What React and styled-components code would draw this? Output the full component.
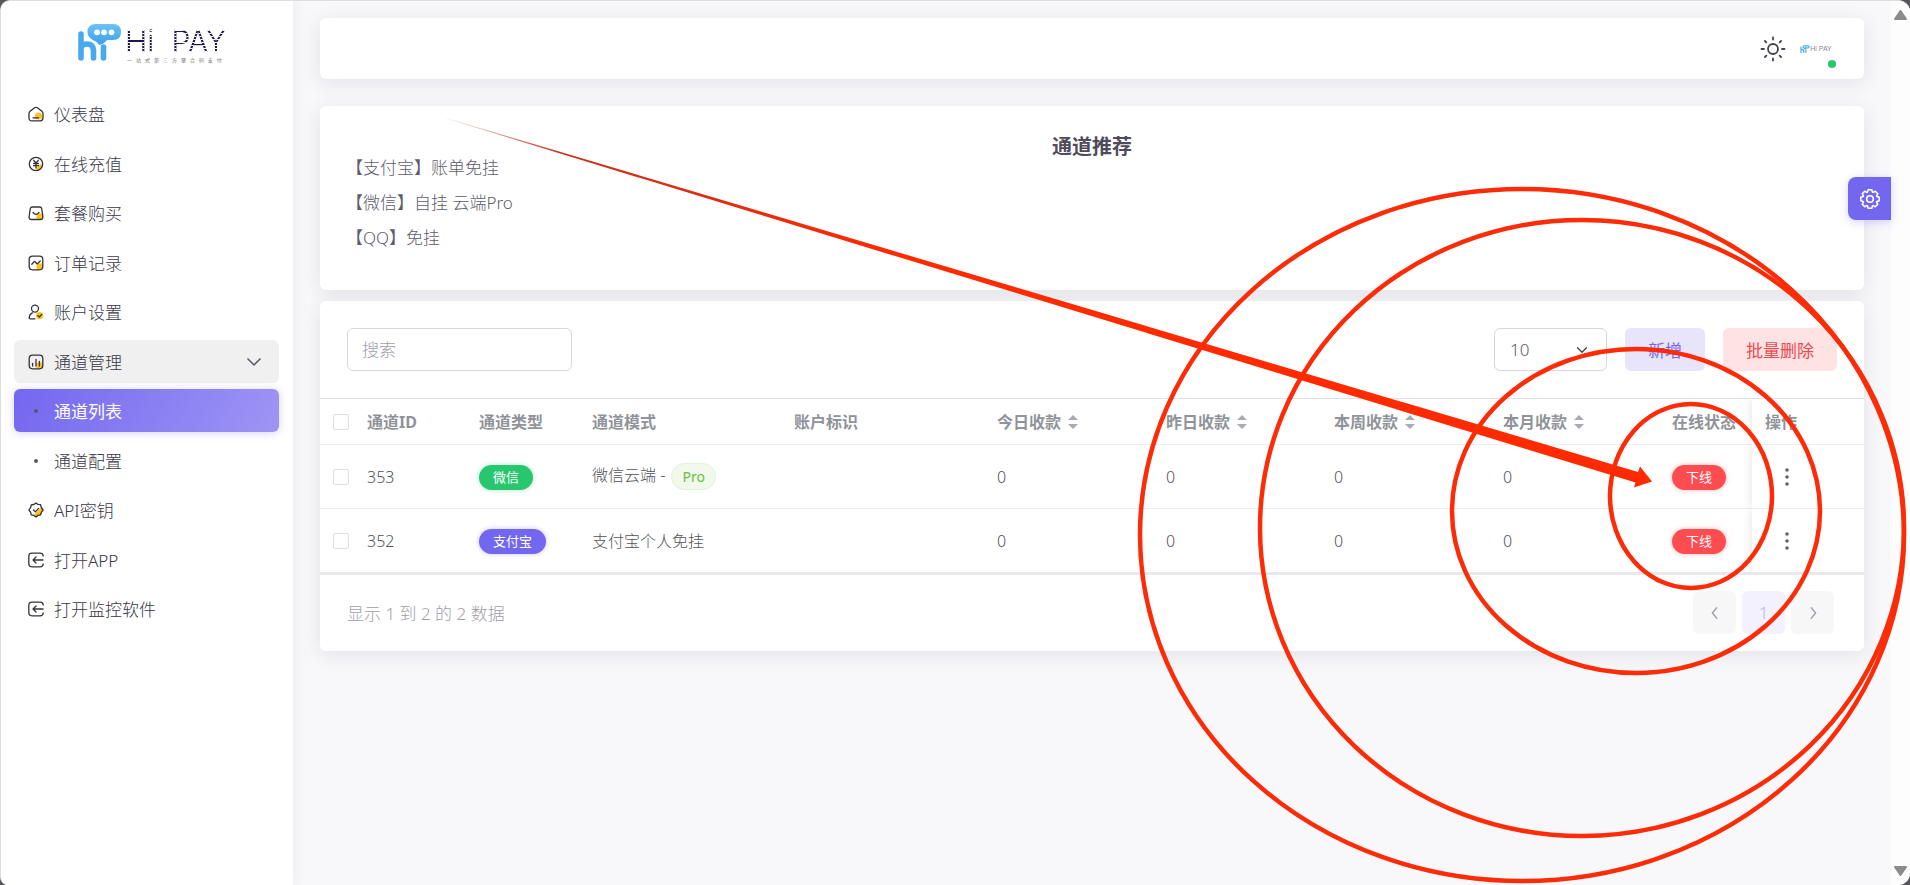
import React, { useState } from "react";
import styled, { createGlobalStyle, css } from "styled-components";

const navItems = [
    { label: '仪表盘', icon: 'home' },
    { label: '在线充值', icon: 'coin' },
    { label: '套餐购买', icon: 'bag' },
    { label: '订单记录', icon: 'order' },
    { label: '账户设置', icon: 'user' },
    {
        label: '通道管理',
        icon: 'chart',
        open: true,
        children: [{ label: '通道列表', active: true }, { label: '通道配置' }],
    },
    { label: 'API密钥', icon: 'badge' },
    { label: '打开APP', icon: 'exit' },
    { label: '打开监控软件', icon: 'exit' },
];

const notices = ['【支付宝】账单免挂', '【微信】自挂 云端Pro', '【QQ】免挂'];

const columns = [
    { label: '通道ID', width: 112 },
    { label: '通道类型', width: 113 },
    { label: '通道模式', width: 202 },
    { label: '账户标识', width: 203 },
    { label: '今日收款', width: 169, sortable: true },
    { label: '昨日收款', width: 168, sortable: true },
    { label: '本周收款', width: 169, sortable: true },
    { label: '本月收款', width: 169, sortable: true },
    { label: '在线状态', width: 93 },
];

const channels = [
    { id: 353, type: '微信', tone: 'green', mode: '微信云端 - ', tag: 'Pro', totals: [0, 0, 0, 0], status: '下线' },
    { id: 352, type: '支付宝', tone: 'purple', mode: '支付宝个人免挂', totals: [0, 0, 0, 0], status: '下线' },
];

const tones = {
    green: '#28c76f',
    purple: '#7367f0',
    red: '#ff4c51',
};

const subtitle = '一站式第三方聚合码支付';

const iconShapes = {
    home: (
        <>
            <circle cx="10.5" cy="10" r="3.6" fill="#fcc419" stroke="none" />
            <path d="M1.8 5.6 6.600 1.800Q8 .8 9.400 1.800l4.800 3.800q.8.8.8 2v4.400q0 2.800-2.800 2.800H3.800Q1 14.800 1 12V7.600q0-1.200.8-2z" />
            <path d="M5 11.800h5.500" />
        </>
    ),
    coin: (
        <>
            <path d="M14.500 8A7 7 0 0 1 8 14.800q0-2.800 2-4.800t4.500-2z" fill="#fcc419" stroke="none" />
            <circle cx="8" cy="8" r="6.700" />
            <path d="M5.700 4.300 8 7l2.300-2.700M8 7v5M5.600 7.500h4.800M5.600 9.700h4.800" />
        </>
    ),
    bag: (
        <>
            <path d="M8.500 14.500V10q0-1.500 1.500-1.500h5v4q0 2-2 2z" fill="#fcc419" stroke="none" />
            <path d="M4.300 2h7.400q1.700 0 2 1.700l1.200 7.800q.3 3-2.500 3H3.600q-2.800 0-2.500-3l1.200-7.800Q2.600 2 4.300 2z" />
            <path d="M5 7.500q3 3.800 6 0" />
        </>
    ),
    order: (
        <>
            <path d="M8.500 14.800V10q0-1.500 1.500-1.500h4.800V12q0 2.800-2.800 2.800z" fill="#fcc419" stroke="none" />
            <rect x="1.200" y="1.200" width="13.600" height="13.600" rx="3.200" />
            <path d="M3.800 9.300 6 6.800q.5-.5 1 0l1.700 1.700q.5.500 1 0L12.200 6" />
        </>
    ),
    user: (
        <>
            <circle cx="11.700" cy="11.700" r="3.600" fill="#fcc419" stroke="none" />
            <circle cx="7" cy="4.600" r="3.500" />
            <path d="M4.300 8.800Q1.200 10.300 1.200 14q0 .8.800.8h5" />
            <path d="m9.800 11.600 1.400 1.400 2.600-2.600" />
        </>
    ),
    chart: (
        <>
            <path d="M8.500 14.800V10q0-1.500 1.500-1.500h4.800V12q0 2.800-2.800 2.800z" fill="#fcc419" stroke="none" />
            <rect x="1.200" y="1.200" width="13.600" height="13.600" rx="3.200" />
            <path d="M4.600 9.500V12M8 5.500V12M11.400 7.500V12" />
        </>
    ),
    badge: (
        <>
            <path d="m14 4.500-9 9 3 1.500 2.500-1 2.800-1.200.5-2.600L15.200 8z" fill="#fcc419" stroke="none" />
            <path d="M8 .9 10 2.400l2.600.200.500 2.600L15.100 8l-1.800 2.300-.700 2.500-2.600.500L8 15.100l-2.300-1.700-2.500-.500-.500-2.600L.9 8l1.800-2.600.500-2.600 2.700-.300z" />
            <path d="m5.500 8 1.800 1.900 3.300-3.500" />
        </>
    ),
    exit: (
        <>
            <path d="M15.200 4Q15 1.200 12 1.200H4Q.8 1.200.8 4.400v7.200q0 3.200 3.200 3.200h8q3 0 3.200-2.800" />
            <path d="M15 8H5M8 5 5 8l3 3" />
        </>
    ),
};

const NavIcon = ({ name }) => (
    <svg width="16" height="16" viewBox="0 0 16 16" fill="none" stroke="#35323d" strokeWidth="1.3" strokeLinecap="round" strokeLinejoin="round" aria-hidden="true">
        {iconShapes[name]}
    </svg>
);

const Chevron = ({ size = 14, direction = 'down', color = '#625f6e' }) => {
    const paths = {
        down: 'M2 5l6 6 6-6',
        left: 'M10 2L5 8l5 6',
        right: 'M6 2l5 6-5 6',
    };
    return (
        <svg width={size} height={size} viewBox="0 0 16 16" fill="none" stroke={color} strokeWidth="1.7" strokeLinecap="round" strokeLinejoin="round" aria-hidden="true">
            <path d={paths[direction]} />
        </svg>
    );
};

const LogoMark = ({ width, height }) => (
    <svg width={width} height={height} viewBox="0 0 43 37" fill="none" aria-hidden="true">
        <defs>
            <linearGradient id="mark" x1="0" y1="0" x2="0" y2="1">
                <stop offset="0" stopColor="#6cc3f3" />
                <stop offset="1" stopColor="#3b9fee" />
            </linearGradient>
        </defs>
        <path
            d="M18 0H35Q43 0 43 8T35 16H29Q26 20 21.500 21Q18 17 14 15.500Q9.500 13 9.500 8Q9.500 0 18 0z"
            fill="url(#mark)"
        />
        <path d="M3 10V34M3 25Q3 20 9 20T15.500 26V34M25.500 23V34" stroke="#48a9ef" strokeWidth="5.600" strokeLinecap="round" />
        <g fill="#fff">
            <circle cx="19" cy="8.300" r="2.900" />
            <circle cx="26" cy="8.300" r="2.900" />
            <circle cx="33.500" cy="8.300" r="2.900" />
        </g>
    </svg>
);

const SunIcon = () => (
    <svg width="26" height="26" viewBox="0 0 26 26" fill="none" stroke="#44414f" strokeWidth="1.800" strokeLinecap="round" aria-hidden="true">
        <circle cx="13" cy="13" r="5" />
        <path d="M13 1.500v2M13 22.500v2M1.500 13h2.500M22 13h2.500M5 5l1.300 1.300M19.700 19.700 21 21M5 21l1.300-1.300M19.700 6.300 21 5" />
    </svg>
);

// eight rounded teeth around a ring
const gearPoints = Array.from({ length: 8 }, (_, i) => (
    [[-20, 7.300], [-11, 9.400], [11, 9.400], [20, 7.300]].map(([offset, radius]) => {
        const angle = ((i * 45 + offset) * Math.PI) / 180;
        return `${(11 + radius * Math.cos(angle)).toFixed(2)},${(11 + radius * Math.sin(angle)).toFixed(2)}`;
    }).join(' ')
)).join(' ');

const GearIcon = () => (
    <svg width="22" height="22" viewBox="0 0 22 22" fill="none" stroke="#fff" strokeWidth="1.600" strokeLinejoin="round" aria-hidden="true">
        <circle cx="11" cy="11" r="3.300" />
        <polygon points={gearPoints} />
    </svg>
);

const SortIcon = () => (
    <svg width="10" height="16" viewBox="0 0 10 16" fill="#a8abb2" aria-hidden="true">
        <path d="M5 1l5 5H0zM5 15l5-5H0z" />
    </svg>
);

const DotsIcon = () => (
    <svg width="4" height="18" viewBox="0 0 4 18" fill="#625f6e" aria-hidden="true">
        <circle cx="2" cy="2" r="1.800" />
        <circle cx="2" cy="9" r="1.800" />
        <circle cx="2" cy="16" r="1.800" />
    </svg>
);

const ScrollArrow = ({ down }) => (
    <svg width="13" height="10" viewBox="0 0 13 10" fill="#8b8b8b" stroke="#8b8b8b" strokeWidth="2" strokeLinejoin="round" aria-hidden="true">
        <path d={down ? 'M1 1h11L6.500 9z' : 'M1 9h11L6.500 1z'} />
    </svg>
);

// red pen marks pointing at the offline channels
const Marks = () => (
    <MarkLayer viewBox="0 0 1910 885" fill="none" stroke="#fb2c07" strokeWidth="4.500" aria-hidden="true">
        <defs>
            <linearGradient id="fade" gradientUnits="userSpaceOnUse" x1="446" y1="118" x2="900" y2="255">
                <stop offset="0" stopColor="#c0392b" stopOpacity="0.100" />
                <stop offset="0.250" stopColor="#c8301c" />
                <stop offset="1" stopColor="#ff2a00" />
            </linearGradient>
        </defs>
        <ellipse cx="1522" cy="535" rx="382" ry="346" />
        <ellipse cx="1582" cy="528" rx="322" ry="308" />
        <ellipse cx="1636" cy="511" rx="184" ry="162" />
        <ellipse cx="1691" cy="496" rx="81" ry="92" />
        <path d="M446 118 1638 472 1640 466.500 1652 481.500 1634 487.500 1635.500 482.500 446 118.600z" fill="url(#fade)" stroke="none" />
    </MarkLayer>
);

const Sidebar = () => (
    <Aside>
        <Brand href="#">
            <LogoMark width="43" height="37" />
            <BrandText>
                <BrandName><span>Hi</span> <span>PAY</span></BrandName>
                <BrandSub>
                    {subtitle.split('').map((char) => <span key={char}>{char}</span>)}
                </BrandSub>
            </BrandText>
        </Brand>
        <nav>
            <NavList>
                {navItems.map((item) => (
                    <NavEntry key={item.label}>
                        <NavLink href="#" $open={item.open}>
                            <NavIcon name={item.icon} />
                            <NavLabel>{item.label}</NavLabel>
                            {item.children && <Chevron size={16} />}
                        </NavLink>
                        {item.children && (
                            <NavList>
                                {item.children.map((child) => (
                                    <NavEntry key={child.label}>
                                        <NavLink href="#" $active={child.active}>
                                            <Bullet />
                                            <NavLabel>{child.label}</NavLabel>
                                        </NavLink>
                                    </NavEntry>
                                ))}
                            </NavList>
                        )}
                    </NavEntry>
                ))}
            </NavList>
        </nav>
    </Aside>
);

const ChannelTable = () => {
    const [selected, setSelected] = useState([]);

    const toggle = (id) => {
        setSelected(selected.includes(id) ? selected.filter((s) => s !== id) : [...selected, id]);
    };

    const toggleAll = () => {
        setSelected(selected.length === channels.length ? [] : channels.map((c) => c.id));
    };

    return (
        <Table>
            <colgroup>
                <Col $width={34} />
                {columns.map((col) => <Col key={col.label} $width={col.width} />)}
                <Col $width={112} />
            </colgroup>
            <thead>
                <tr>
                    <CheckHead>
                        <Checkbox type="checkbox" aria-label="全选" checked={selected.length === channels.length} onChange={toggleAll} />
                    </CheckHead>
                    {columns.map((col) => (
                        <Th key={col.label}>
                            {col.sortable ? <SortButton type="button">{col.label}<SortIcon /></SortButton> : col.label}
                        </Th>
                    ))}
                    <StickyTh>操作</StickyTh>
                </tr>
            </thead>
            <tbody>
                {channels.map((row) => (
                    <Row key={row.id}>
                        <CheckCell>
                            <Checkbox type="checkbox" aria-label={`选择 ${row.id}`} checked={selected.includes(row.id)} onChange={() => toggle(row.id)} />
                        </CheckCell>
                        <Td>{row.id}</Td>
                        <Td><Pill $tone={row.tone}>{row.type}</Pill></Td>
                        <Td>{row.mode}{row.tag && <Tag>{row.tag}</Tag>}</Td>
                        <Td />
                        {row.totals.map((total, i) => <Td key={i}>{total}</Td>)}
                        <Td><Pill $tone="red">{row.status}</Pill></Td>
                        <StickyTd>
                            <MoreButton type="button" aria-label="更多"><DotsIcon /></MoreButton>
                        </StickyTd>
                    </Row>
                ))}
            </tbody>
        </Table>
    );
};

const App = () => {
    const [search, setSearch] = useState('');
    const [pageSize, setPageSize] = useState('10');

    return (
        <>
            <GlobalStyle />
            <Frame>
                <Sidebar />
                <Main>
                    <TopBar>
                        <IconButton type="button" aria-label="切换主题"><SunIcon /></IconButton>
                        <Avatar type="button" aria-label="账户">
                            <LogoMark width="10" height="8" />
                            <AvatarName>Hi PAY</AvatarName>
                            <OnlineDot />
                        </Avatar>
                    </TopBar>
                    <NoticeCard>
                        <NoticeTitle>通道推荐</NoticeTitle>
                        {notices.map((notice) => <Notice key={notice}>{notice}</Notice>)}
                    </NoticeCard>
                    <Card>
                        <Toolbar>
                            <SearchInput
                                type="text"
                                placeholder="搜索"
                                aria-label="搜索"
                                value={search}
                                onChange={(ev) => setSearch(ev.target.value)}
                            />
                            <Actions>
                                <SelectWrap>
                                    <Select aria-label="每页数量" value={pageSize} onChange={(ev) => setPageSize(ev.target.value)}>
                                        <option>10</option>
                                        <option>25</option>
                                        <option>50</option>
                                    </Select>
                                    <SelectArrow><Chevron size={12} color="#44414f" /></SelectArrow>
                                </SelectWrap>
                                <FlatButton type="button" $color="#7367f0" $bg="#e8e5fb">新增</FlatButton>
                                <FlatButton type="button" $color="#ea4b50" $bg="#ffe2e3">批量删除</FlatButton>
                            </Actions>
                        </Toolbar>
                        <TableWrap><ChannelTable /></TableWrap>
                        <Footer>
                            <Summary>显示 1 到 2 的 2 数据</Summary>
                            <Pager>
                                <PageButton type="button" aria-label="上一页"><Chevron direction="left" color="#a5a3ae" /></PageButton>
                                <PageButton type="button" $current>1</PageButton>
                                <PageButton type="button" aria-label="下一页"><Chevron direction="right" color="#a5a3ae" /></PageButton>
                            </Pager>
                        </Footer>
                    </Card>
                </Main>
                <ScrollRail>
                    <ScrollArrow />
                    <ScrollArrow down />
                </ScrollRail>
                <SettingsButton type="button" aria-label="设置"><GearIcon /></SettingsButton>
                <Marks />
            </Frame>
        </>
    );
};

const GlobalStyle = createGlobalStyle`
    * {
        box-sizing: border-box;
    }
    body {
        margin: 0;
        background: #55555a;
        font-family: "Noto Sans", "Noto Sans CJK SC", sans-serif;
        font-size: 17px;
        font-weight: 300;
        color: #5f5c6c;
    }
    button, input, select {
        font: inherit;
        color: inherit;
    }
    button {
        border: none;
        padding: 0;
        background: none;
        cursor: pointer;
    }
    svg {
        display: block;
        flex-shrink: 0;
    }
`

const Frame = styled.div`
    position: relative;
    display: flex;
    min-height: 100vh;
    border-top: 1px solid #dedee2;
    border-left: 1px solid #dedee2;
    border-radius: 10px 12px 12px 8px;
    background: #f8f8fb;
    overflow: hidden;
`
const Aside = styled.aside`
    width: 292px;
    flex-shrink: 0;
    padding: 0 14px 0 13px;
    background: #fff;
    box-shadow: 0 0 15px rgba(34, 41, 47, 0.08);
`
const Brand = styled.a`
    display: flex;
    height: 91px;
    padding: 23px 0 0 64px;
    gap: 4px;
    text-decoration: none;
`
const BrandText = styled.div`
    width: 101px;
`
/* dotted lettering: the dot grid shows only through the glyphs */
const BrandName = styled.div`
    display: flex;
    justify-content: space-between;
    font-family: Inter, "Liberation Sans", sans-serif;
    font-size: 30px;
    font-weight: 300;
    line-height: 34px;
    height: 33px;
    white-space: nowrap;
    color: transparent;
    background:
        repeating-linear-gradient(0deg, transparent 0 2px, #fff 2px 3px),
        #1f164c;
    -webkit-background-clip: text;
    background-clip: text;
`
const BrandSub = styled.div`
    display: flex;
    justify-content: space-between;
    padding: 0 4px 0 2px;
    font-size: 5px;
    font-weight: 400;
    line-height: 7px;
    color: #777;
`
const NavList = styled.ul`
    margin: 0;
    padding: 0;
    list-style: none;
`
const NavEntry = styled.li`
    margin-top: 6px;

    &:nth-child(even) {
        margin-top: 7px;
    }
    nav > ul > &:first-child {
        margin-top: 0;
    }
`
const NavLink = styled.a`
    display: flex;
    align-items: center;
    gap: 10px;
    height: 43px;
    padding: 0 17px 0 14px;
    border-radius: 6px;
    color: #3b3848;
    text-decoration: none;

    ${({ $open }) => $open && css`
        background: #f0f0f0;
    `}
    ${({ $active }) => $active && css`
        font-weight: 400;
        color: #fff;
        background: linear-gradient(118deg, #7367f0, #9e95f5);
        box-shadow: 0 1px 8px rgba(115, 103, 240, 0.3);
    `}
`
const NavLabel = styled.span`
    flex: 1;
`
const Bullet = styled.span`
    width: 4px;
    height: 4px;
    margin: 0 6px;
    border-radius: 50%;
    background: #5c5870;
`
const Main = styled.main`
    flex: 1;
    min-width: 0;
    padding: 17px 27px;
`
const Card = styled.section`
    border-radius: 6px;
    background: #fff;
    box-shadow: 0 4px 20px rgba(34, 41, 47, 0.1);
`
const TopBar = styled.header`
    display: flex;
    align-items: center;
    justify-content: flex-end;
    gap: 10px;
    height: 61px;
    margin-bottom: 27px;
    padding-right: 28px;
    border-radius: 6px;
    background: #fff;
    box-shadow: 0 4px 20px rgba(34, 41, 47, 0.1);
`
const IconButton = styled.button`
    display: flex;
`
const Avatar = styled.button`
    position: relative;
    display: flex;
    align-items: center;
    justify-content: center;
    width: 40px;
    height: 40px;
    border-radius: 50%;
`
const AvatarName = styled.span`
    font-family: "Liberation Sans", sans-serif;
    font-size: 7px;
    line-height: 8px;
    white-space: nowrap;
    color: #8a8794;
`
const OnlineDot = styled.span`
    position: absolute;
    right: 0;
    bottom: 1px;
    width: 8px;
    height: 8px;
    border-radius: 50%;
    background: #28c76f;
`
const NoticeCard = styled(Card)`
    display: flex;
    flex-direction: column;
    gap: 11px;
    margin-bottom: 11px;
    padding: 31px 26px 40px;
`
const NoticeTitle = styled.h4`
    margin: 0 0 -12px;
    font-size: 20px;
    line-height: 20px;
    font-weight: 700;
    text-align: center;
    color: #4f4b5c;
`
const Notice = styled.p`
    margin: 0;
    line-height: 24px;
`
const Toolbar = styled.div`
    display: flex;
    justify-content: space-between;
    padding: 27px;
`
const Actions = styled.div`
    display: flex;
    gap: 18px;
`
const controlBox = css`
    height: 43px;
    border: 1px solid #d8d6de;
    border-radius: 6px;
    background: #fff;
    outline: none;
`
const SearchInput = styled.input`
    ${controlBox}
    width: 225px;
    padding: 0 14px;

    &::placeholder {
        color: #a0a0aa;
    }
`
const SelectWrap = styled.div`
    position: relative;
`
const Select = styled.select`
    ${controlBox}
    width: 113px;
    padding: 0 15px;
    appearance: none;
`
const SelectArrow = styled.span`
    position: absolute;
    top: 16px;
    right: 19px;
    pointer-events: none;
`
const FlatButton = styled.button`
    height: 43px;
    padding: 0 23px;
    border-radius: 6px;
    font-weight: 400;
    color: ${({ $color }) => $color};
    background: ${({ $bg }) => $bg};
`
const TableWrap = styled.div`
    overflow: hidden;
    border-top: 1px solid #e2e2e6;
    border-bottom: 3px solid #e8e8ee;
`
const Table = styled.table`
    width: 100%;
    table-layout: fixed;
    border-collapse: separate;
    border-spacing: 0;
    font-size: 16px;
    line-height: 24px;
    color: #525458;
`
const Col = styled.col`
    width: ${({ $width }) => $width}px;
`
const Th = styled.th`
    height: 46px;
    padding: 0 0 0 13px;
    border-bottom: 1px solid #ebeef5;
    font-weight: 700;
    text-align: left;
    white-space: nowrap;
    color: #909399;
`
const CheckHead = styled(Th)`
    line-height: 0;
`
const Row = styled.tr`
    height: 64px;

    &:last-child {
        height: 63px;
    }
    &:last-child > td {
        border-bottom: none;
    }
`
const Td = styled.td`
    padding: 0 0 0 13px;
    border-bottom: 1px solid #ebeef5;
    white-space: nowrap;
`
const CheckCell = styled(Td)`
    line-height: 0;
`
const stickyEdge = css`
    box-shadow: 0 0 10px rgba(0, 0, 0, 0.12);
    clip-path: inset(0 0 0 -12px);
    background: #fff;
`
const StickyTh = styled(Th)`
    ${stickyEdge}
`
const StickyTd = styled(Td)`
    ${stickyEdge}
`
const Checkbox = styled.input`
    width: 16px;
    height: 16px;
    margin: 0;
    border: 1px solid #dcdfe6;
    border-radius: 2px;
    background: #fff;
    appearance: none;

    &:checked {
        border-color: #7367f0;
        background: #7367f0;
    }
`
const SortButton = styled.button`
    display: flex;
    align-items: center;
    gap: 7px;
`
const Pill = styled.span`
    display: inline-block;
    height: 25px;
    margin-top: 2px;
    padding: 0 14px;
    border-radius: 13px;
    font-size: 13px;
    font-weight: 400;
    line-height: 25px;
    vertical-align: middle;
    color: #fff;
    background: ${({ $tone }) => tones[$tone]};
    box-shadow: 0 0 5px ${({ $tone }) => tones[$tone]}66;
`
const Tag = styled.span`
    display: inline-block;
    height: 27px;
    margin-left: 2px;
    padding: 0 10px;
    border: 1px solid #e1f3d8;
    border-radius: 14px;
    font-size: 14px;
    font-weight: 400;
    line-height: 25px;
    vertical-align: middle;
    color: #67c23a;
    background: #f0f9eb;
`
const MoreButton = styled.button`
    display: flex;
    align-items: center;
    justify-content: center;
    width: 43px;
    height: 43px;
`
const Footer = styled.footer`
    display: flex;
    align-items: center;
    justify-content: space-between;
    padding: 16px 30px 17px 27px;
`
const Summary = styled.p`
    margin: 0;
    color: #9f9ea9;
`
const Pager = styled.div`
    display: flex;
    gap: 6px;
`
const PageButton = styled.button`
    display: flex;
    align-items: center;
    justify-content: center;
    width: 43px;
    height: 43px;
    border-radius: 6px;
    color: ${({ $current }) => $current ? '#b9b3f7' : '#a5a3ae'};
    background: ${({ $current }) => $current ? '#f3f1fe' : '#f7f7f8'};
`
const ScrollRail = styled.div`
    display: flex;
    flex-direction: column;
    align-items: center;
    justify-content: space-between;
    width: 19px;
    flex-shrink: 0;
    padding: 9px 0;
    background: #fdfdfd;
`
const SettingsButton = styled.button`
    position: absolute;
    top: 176px;
    right: 19px;
    display: flex;
    align-items: center;
    justify-content: center;
    width: 43px;
    height: 43px;
    border-radius: 8px 0 0 8px;
    background: #7367f0;
    box-shadow: 0 2px 8px rgba(115, 103, 240, 0.3);
`
const MarkLayer = styled.svg`
    position: fixed;
    inset: 0;
    width: 100%;
    height: 100%;
    pointer-events: none;
`

export default App;
